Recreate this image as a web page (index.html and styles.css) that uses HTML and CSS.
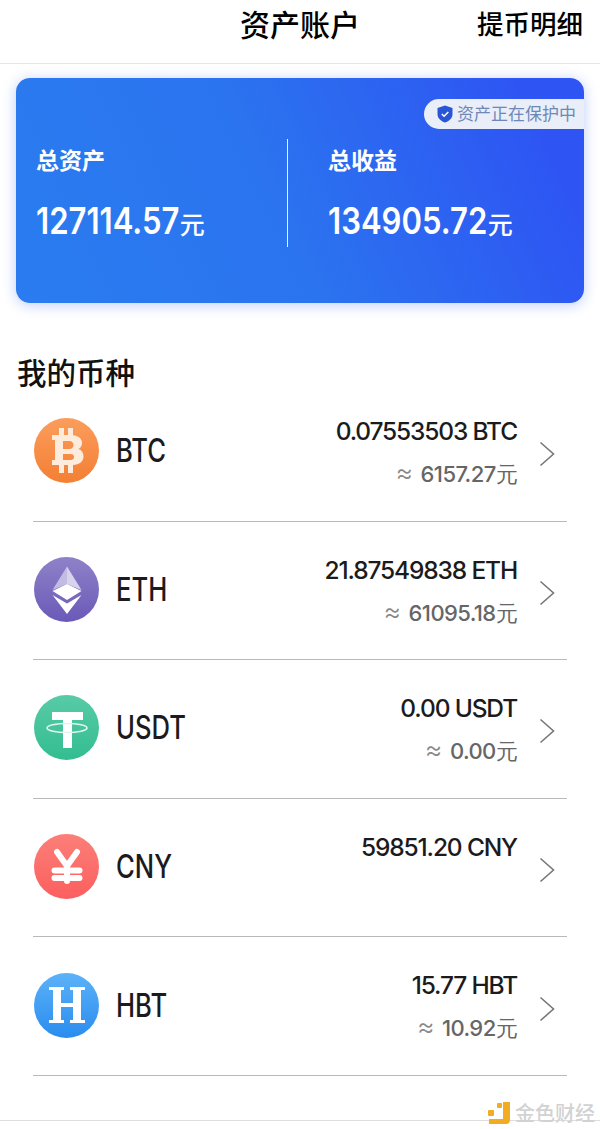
FILE: index.html
```html
<!DOCTYPE html>
<html lang="zh">
<head>
<meta charset="utf-8">
<title>资产账户</title>
<link rel="stylesheet" href="styles.css">
</head>
<body>
<div class="page">
  <header class="topbar">
    <div class="topbar-spacer"></div>
    <h1 class="topbar-title">资产账户</h1>
    <a class="topbar-link">提币明细</a>
  </header>

  <section class="card">
    <div class="badge">
      <svg class="badge-icon" viewBox="0 0 16 18"><path d="M8 .5 15.5 3v6c0 4.2-3.2 7.2-7.5 8.5C3.700 16.200.5 13.200.5 9V3z" fill="#2a56d6"/><path d="M4.800 9l2.300 2.300 4.200-4.300" fill="none" stroke="#fff" stroke-width="1.500"/></svg>
      <span>资产正在保护中</span>
    </div>
    <div class="stat stat-left">
      <div class="stat-label">总资产</div>
      <div class="stat-value"><span class="num num-a">127114.57</span><span class="unit">元</span></div>
    </div>
    <div class="stat stat-right">
      <div class="stat-label">总收益</div>
      <div class="stat-value"><span class="num num-b">134905.72</span><span class="unit">元</span></div>
    </div>
  </section>

  <h2 class="section-title">我的币种</h2>

  <ul class="coins">
    <li class="coin">
      <svg class="coin-icon" viewBox="0 0 65 65"><defs><linearGradient id="gb" x1="0" y1="0" x2="0" y2="1"><stop offset="0" stop-color="#fb9d5c"/><stop offset="1" stop-color="#f47f33"/></linearGradient></defs><circle cx="32.500" cy="32.500" r="32.500" fill="url(#gb)"/><path fill-rule="evenodd" fill="#fdebdc" d="M18 17h7V10h5v7h4V10h5v7.300C45 18 48 21 48 25c0 2.700-1.300 4.800-3.500 6 3 1 5 3.800 5 7.200 0 5.300-4 8.300-10.500 8.800V55h-5v-8h-4v8h-5v-8h-7v-5h3V22h-3zM29 23v8h6.500c2.500 0 4-1.700 4-4s-1.500-4-4-4zM29 36v6h7.500c2.300 0 3.500-1.300 3.500-3s-1.200-3-3.500-3z"/></svg>
      <span class="coin-name">BTC</span>
      <div class="coin-vals">
        <div class="amount">0.07553503 BTC</div>
        <div class="approx"><span class="approx-sign">≈</span>6157.27元</div>
      </div>
      <svg class="chev" viewBox="0 0 16 26"><path d="M1.500 1.500 14.500 13 1.500 24.500"/></svg>
    </li>
    <li class="coin">
      <svg class="coin-icon" viewBox="0 0 65 65"><defs><linearGradient id="ge" x1="0" y1="0" x2="0" y2="1"><stop offset="0" stop-color="#8f82c8"/><stop offset="1" stop-color="#6a59b8"/></linearGradient></defs><circle cx="32.500" cy="32.500" r="32.500" fill="url(#ge)"/><path fill="#c3bce2" d="M33 9.500 18.500 33 33 27z"/><path fill="#d8d3ec" d="M33 9.500 47.500 33 33 27z"/><path fill="#fff" d="M18.500 34 33 27l14.500 7L33 43z"/><path fill="#fff" d="M18.500 38 33 46.500 47.500 38 33 57z"/></svg>
      <span class="coin-name">ETH</span>
      <div class="coin-vals">
        <div class="amount">21.87549838 ETH</div>
        <div class="approx"><span class="approx-sign">≈</span>61095.18元</div>
      </div>
      <svg class="chev" viewBox="0 0 16 26"><path d="M1.500 1.500 14.500 13 1.500 24.500"/></svg>
    </li>
    <li class="coin">
      <svg class="coin-icon" viewBox="0 0 65 65"><defs><linearGradient id="gu" x1="0" y1="0" x2="0" y2="1"><stop offset="0" stop-color="#58cba6"/><stop offset="1" stop-color="#33bd90"/></linearGradient></defs><circle cx="32.500" cy="32.500" r="32.500" fill="url(#gu)"/><path fill="#fff" d="M18 17h31v8H38v28h-9V25H18z"/><ellipse cx="33" cy="33" rx="20" ry="4.500" fill="none" stroke="#dff5ed" stroke-width="1.600"/></svg>
      <span class="coin-name">USDT</span>
      <div class="coin-vals">
        <div class="amount">0.00 USDT</div>
        <div class="approx"><span class="approx-sign">≈</span>0.00元</div>
      </div>
      <svg class="chev" viewBox="0 0 16 26"><path d="M1.500 1.500 14.500 13 1.500 24.500"/></svg>
    </li>
    <li class="coin">
      <svg class="coin-icon" viewBox="0 0 65 65"><defs><linearGradient id="gc" x1="0" y1="0" x2="0" y2="1"><stop offset="0" stop-color="#fb7f78"/><stop offset="1" stop-color="#fb5f5f"/></linearGradient></defs><circle cx="32.500" cy="32.500" r="32.500" fill="url(#gc)"/><path fill="none" stroke="#fff" stroke-width="6" stroke-linecap="round" stroke-linejoin="round" d="M23 18l10 14 10-14M20.500 36.500h25M20.500 44h25M33 32v15"/></svg>
      <span class="coin-name">CNY</span>
      <div class="coin-vals">
        <div class="amount">59851.20 CNY</div>
      </div>
      <svg class="chev" viewBox="0 0 16 26"><path d="M1.500 1.500 14.500 13 1.500 24.500"/></svg>
    </li>
    <li class="coin">
      <svg class="coin-icon" viewBox="0 0 65 65"><defs><linearGradient id="gh" x1="0" y1="0" x2="0" y2="1"><stop offset="0" stop-color="#5cb2f8"/><stop offset="1" stop-color="#2a8cee"/></linearGradient></defs><circle cx="32.500" cy="32.500" r="32.500" fill="url(#gh)"/><path fill="#fff" d="M15 14h15v3h-3v13h12V17h-3v-3h15v3h-4v30h4v3H36v-3h3V34H27v13h3v3H15v-3h4V17h-4z"/></svg>
      <span class="coin-name">HBT</span>
      <div class="coin-vals">
        <div class="amount">15.77 HBT</div>
        <div class="approx"><span class="approx-sign">≈</span>10.92元</div>
      </div>
      <svg class="chev" viewBox="0 0 16 26"><path d="M1.500 1.500 14.500 13 1.500 24.500"/></svg>
    </li>
  </ul>

  <div class="bottom-rule"></div>
  <div class="watermark">
    <svg class="wm-icon" viewBox="0 0 22 22"><path fill="#f2ac22" d="M15 0h7v18a4 4 0 0 1-4 4H1v-5h14z"/><rect x="9" y="1" width="5" height="5" rx="1" fill="#f2ac22"/><rect x="0" y="8" width="6" height="6" rx="1" fill="#f2ac22"/></svg>
    <span>金色财经</span>
  </div>
</div>
</body>
</html>
```
FILE: styles.css
```css
* { box-sizing: border-box; }
html, body { margin: 0; padding: 0; background: #fff; }
.page {
  position: relative;
  width: 600px;
  height: 1129px;
  overflow: hidden;
  font-family: "Noto Sans CJK SC", "Liberation Sans", sans-serif;
  color: #1b1b1d;
}
.topbar {
  height: 64px;
  border-bottom: 1px solid #e6e6e8;
  display: grid;
  grid-template-columns: 1fr auto 1fr;
  align-items: start;
}
.topbar-title {
  margin: 0;
  font-size: 30px;
  line-height: 46px;
  font-weight: 500;
  color: #000;
}
.topbar-link {
  justify-self: end;
  padding-right: 17px;
  font-size: 26.500px;
  line-height: 46px;
  font-weight: 500;
  color: #000;
}
.card {
  position: relative;
  margin: 14px 16px 0;
  height: 225px;
  border-radius: 14px;
  padding-top: 61px;
  display: flex;
  align-items: flex-start;
  color: #fff;
  background: linear-gradient(65deg, #2a7cf0 0%, #2b74ef 45%, #2e55f3 90%);
  box-shadow: 0 2px 14px rgba(60, 100, 240, 0.32);
}
.badge {
  position: absolute;
  top: 21px;
  right: 0;
  width: 160px;
  height: 30px;
  padding-left: 13px;
  padding-bottom: 3px;
  display: flex;
  align-items: center;
  gap: 4px;
  border-radius: 15px 0 0 15px;
  background: #e9eef9;
  color: #6d88b6;
  font-size: 17px;
}
.badge-icon { width: 16px; height: 18px; flex: none; margin-top: 3px; }
.stat { height: 108px; }
.stat-left { width: 272px; padding-left: 20px; border-right: 1.500px solid #e9f0ff; }
.stat-right { padding-left: 40px; }
.stat-label {
  font-size: 23px;
  line-height: 40px;
  font-weight: 700;
}
.stat-value {
  margin-top: 20px;
  display: flex;
  align-items: flex-end;
  line-height: 44px;
}
.num {
  font-family: "Inter", "Roboto", sans-serif;
  font-weight: 600;
  font-size: 37px;
  transform: scaleX(0.84);
  transform-origin: left center;
}
.num-a { margin-right: -27px; }
.num-b { margin-right: -30px; }
.unit {
  font-size: 25px;
  line-height: 40px;
  font-weight: 500;
}
.section-title {
  margin: 47px 0 0 17px;
  font-size: 29.500px;
  line-height: 42px;
  font-weight: 500;
  color: #111;
}
.coins {
  list-style: none;
  margin: -9px 33px 0;
  padding: 0;
}
.coin {
  height: 138.600px;
  border-bottom: 1px solid #b9b9bb;
  padding-bottom: 2px;
  display: flex;
  align-items: center;
}
.coin-icon { width: 65px; height: 65px; margin-left: 1px; flex: none; }
.coin-name {
  margin-left: 17px;
  font-family: "Inter", "Roboto", sans-serif;
  font-size: 32px;
  font-weight: 500;
  transform: scaleX(0.8);
  transform-origin: left center;
  color: #1b1b1d;
}
.coin-vals {
  margin-left: auto;
  align-self: flex-start;
  padding-top: 30px;
  text-align: right;
}
.amount {
  font-family: "Inter", "Roboto", sans-serif;
  font-size: 24.500px;
  font-weight: 450;
  line-height: 36px;
  letter-spacing: -1.150px;
  color: #1b1b1d;
}
.approx {
  margin-top: 8px;
  font-family: "Inter", "Roboto", sans-serif;
  font-size: 22px;
  font-weight: 450;
  line-height: 34px;
  letter-spacing: -0.6px;
  color: #666;
}
.approx-sign {
  margin-right: 8px;
  font-size: 27px;
  font-weight: 300;
  line-height: 0;
  color: #888;
}
.chev {
  width: 16px;
  height: 26px;
  margin: 7px 12px 0 22px;
  flex: none;
  fill: none;
  stroke: #777;
  stroke-width: 1.600;
}
.bottom-rule {
  position: absolute;
  left: 0;
  right: 0;
  top: 1120px;
  height: 1px;
  background: #dedede;
}
.watermark {
  position: absolute;
  left: 488px;
  top: 1101px;
  display: flex;
  align-items: center;
  gap: 5px;
  color: #d2d2d2;
  font-size: 20px;
  font-weight: 500;
  line-height: 24px;
}
.wm-icon { width: 22px; height: 22px; flex: none; }
```
